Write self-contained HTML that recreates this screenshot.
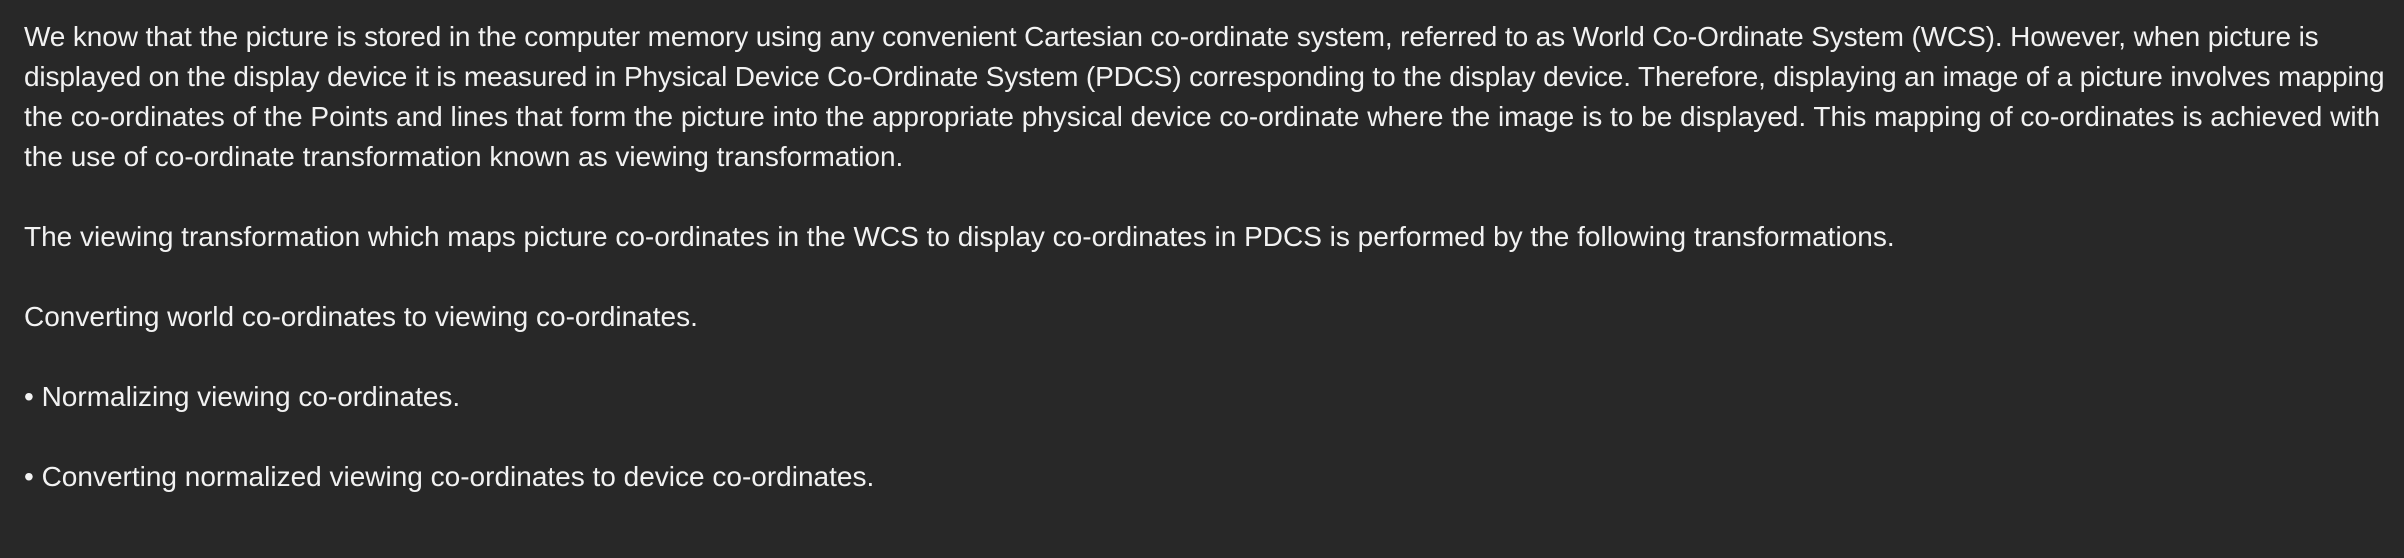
<!DOCTYPE html>
<html><head><meta charset="utf-8"><style>
html,body{margin:0;padding:0;background:#282828;width:2404px;height:558px;overflow:hidden}
body{font-family:"Liberation Sans",Arial,sans-serif;font-size:28px;line-height:40px;color:#f2f2f2;letter-spacing:0}
.w{position:absolute;left:24px;top:17px;width:2378px}
p{margin:0 0 40px 0;white-space:nowrap}
.a{letter-spacing:-0.12px}.b{letter-spacing:-0.14px}
</style></head><body><div class="w">
<p><span class="a">We know that the picture is stored in the computer memory using any convenient Cartesian co-ordinate system, referred to as World Co-Ordinate System (WCS). However, when picture is</span><br><span class="b">displayed on the display device it is measured in Physical Device Co-Ordinate System (PDCS) corresponding to the display device. Therefore, displaying an image of a picture involves mapping</span><br>the co-ordinates of the Points and lines that form the picture into the appropriate physical device co-ordinate where the image is to be displayed. This mapping of co-ordinates is achieved with<br>the use of co-ordinate transformation known as viewing transformation.</p>
<p>The viewing transformation which maps picture co-ordinates in the WCS to display co-ordinates in PDCS is performed by the following transformations.</p>
<p>Converting world co-ordinates to viewing co-ordinates.</p>
<p>• Normalizing viewing co-ordinates.</p>
<p>• Converting normalized viewing co-ordinates to device co-ordinates.</p>
</div></body></html>
